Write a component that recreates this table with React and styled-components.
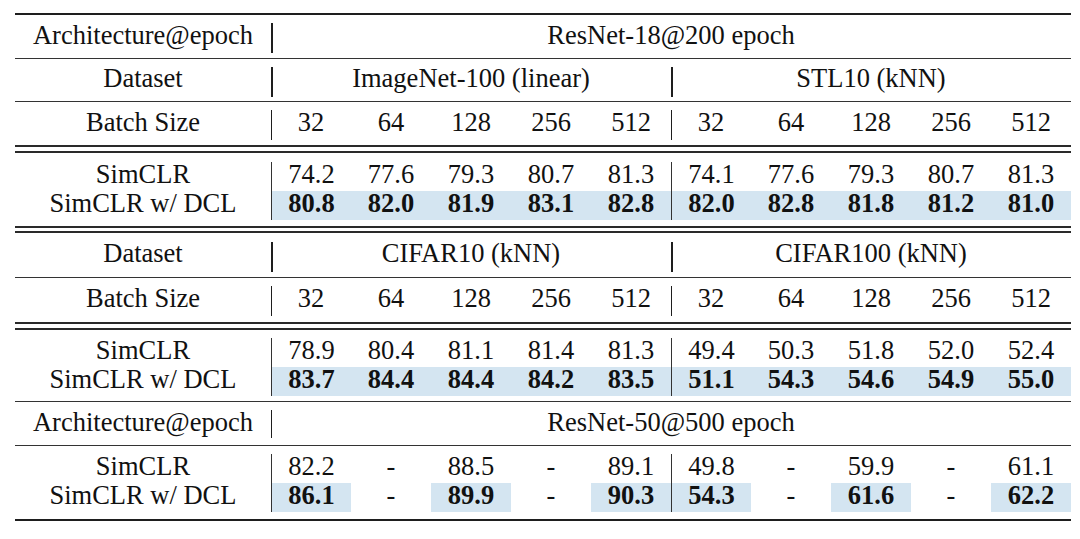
import React from "react";
import styled, { createGlobalStyle, css } from "styled-components";

const GlobalStyle = createGlobalStyle`
  html, body {
    margin: 0;
    padding: 0;
    background: #fff;
  }
  body {
    font-family: "Liberation Serif", "Times New Roman", serif;
    color: #111;
  }
`;

const Page = styled.div`
  width: 1080px;
  height: 539px;
  padding: 13px 0 0 15px;
  box-sizing: border-box;
  overflow: hidden;
`;

const Table = styled.div`
  width: 1056px;
  display: flex;
  flex-direction: column;
`;

const Rule = styled.div`
  height: ${(p) => p.$w || 1}px;
  background: ${(p) => (p.$w > 1 ? "#1e1e1e" : "#333")};
`;

const DoubleRule = styled.div`
  height: ${(p) => p.$h || 8}px;
  box-sizing: border-box;
  border-top: 2px solid #2a2a2a;
  border-bottom: 2px solid #2a2a2a;
`;

const HeadRow = styled.div`
  display: grid;
  grid-template-columns: 256px repeat(10, 80px);
  height: ${(p) => p.$h}px;
  font-size: 26.5px;
`;

const HeadCell = styled.div`
  grid-column: span ${(p) => p.$span || 1};
  position: relative;
  text-align: center;
  line-height: ${(p) => p.$h - 3}px;
  height: 100%;
  ${(p) =>
    p.$bar &&
    css`
      &::before {
        content: "";
        position: absolute;
        left: 0;
        top: ${p.$barTop}px;
        height: ${p.$barH}px;
        width: ${p.$barW}px;
        background: #1e1e1e;
      }
    `}
`;

const Block = styled.div`
  padding: ${(p) => p.$pt}px 0 ${(p) => p.$pb}px;
`;

const DataRow = styled.div`
  display: grid;
  grid-template-columns: 256px repeat(10, 80px);
  height: 29px;
  font-size: 26.5px;
  line-height: 24px;
  ${(p) =>
    p.$band &&
    css`
      background: linear-gradient(to right, transparent 256px, #d4e5f1 256px);
    `}
`;

const Cell = styled.div`
  text-align: center;
  font-weight: ${(p) => (p.$bold ? 700 : 400)};
  background: ${(p) => (p.$hl ? "#d4e5f1" : "transparent")};
  ${(p) =>
    p.$start &&
    css`
      border-left: 1px solid #333;
    `}
`;

const Label = styled.div`
  text-align: center;
`;

const sizes = ["32", "64", "128", "256", "512"];

function Header({ h, label, children, bar }) {
  return (
    <HeadRow $h={h}>
      <HeadCell $h={h}>{label}</HeadCell>
      {children.map((text, i) => (
        <HeadCell
          key={i}
          $h={h}
          $span={10 / children.length}
          $bar
          $barTop={bar.top}
          $barH={bar.h}
          $barW={bar.w}
        >
          {text}
        </HeadCell>
      ))}
    </HeadRow>
  );
}

function BatchRow({ h, bar }) {
  return (
    <HeadRow $h={h}>
      <HeadCell $h={h}>Batch Size</HeadCell>
      {[...sizes, ...sizes].map((s, i) => (
        <HeadCell
          key={i}
          $h={h}
          $bar={i % 5 === 0}
          $barTop={bar.top}
          $barH={bar.h}
          $barW={1}
        >
          {s}
        </HeadCell>
      ))}
    </HeadRow>
  );
}

function Results({ base, ours, band, pt, pb }) {
  return (
    <Block $pt={pt} $pb={pb}>
      <DataRow>
        <Label>SimCLR</Label>
        {base.map((v, i) => (
          <Cell key={i} $start={i % 5 === 0}>
            {v}
          </Cell>
        ))}
      </DataRow>
      <DataRow $band={band}>
        <Label>SimCLR w/ DCL</Label>
        {ours.map((v, i) => (
          <Cell
            key={i}
            $start={i % 5 === 0}
            $bold={v !== "-"}
            $hl={!band && v !== "-"}
          >
            {v}
          </Cell>
        ))}
      </DataRow>
    </Block>
  );
}

export default function App() {
  return (
    <Page>
      <GlobalStyle />
      <Table>
        <Rule $w={2} />
        <Header h={43} label="Architecture@epoch" bar={{ top: 8, h: 30, w: 2 }}>
          {["ResNet-18@200 epoch"]}
        </Header>
        <Rule />
        <Header h={42} label="Dataset" bar={{ top: 8, h: 30, w: 2 }}>
          {["ImageNet-100 (linear)", "STL10 (kNN)"]}
        </Header>
        <Rule />
        <BatchRow h={43} bar={{ top: 8, h: 30 }} />
        <DoubleRule $h={8} />
        <Results
          pt={9}
          pb={6}
          band
          base={["74.2", "77.6", "79.3", "80.7", "81.3", "74.1", "77.6", "79.3", "80.7", "81.3"]}
          ours={["80.8", "82.0", "81.9", "83.1", "82.8", "82.0", "82.8", "81.8", "81.2", "81.0"]}
        />
        <DoubleRule $h={7} />
        <Header h={44} label="Dataset" bar={{ top: 9, h: 30, w: 2 }}>
          {["CIFAR10 (kNN)", "CIFAR100 (kNN)"]}
        </Header>
        <Rule />
        <BatchRow h={44} bar={{ top: 8, h: 30 }} />
        <DoubleRule $h={8} />
        <Results
          pt={8}
          pb={5}
          band
          base={["78.9", "80.4", "81.1", "81.4", "81.3", "49.4", "50.3", "51.8", "52.0", "52.4"]}
          ours={["83.7", "84.4", "84.4", "84.2", "83.5", "51.1", "54.3", "54.6", "54.9", "55.0"]}
        />
        <Rule />
        <Header h={43} label="Architecture@epoch" bar={{ top: 8, h: 28, w: 1 }}>
          {["ResNet-50@500 epoch"]}
        </Header>
        <Rule />
        <Results
          pt={8}
          pb={7}
          base={["82.2", "-", "88.5", "-", "89.1", "49.8", "-", "59.9", "-", "61.1"]}
          ours={["86.1", "-", "89.9", "-", "90.3", "54.3", "-", "61.6", "-", "62.2"]}
        />
        <Rule $w={2} />
      </Table>
    </Page>
  );
}
